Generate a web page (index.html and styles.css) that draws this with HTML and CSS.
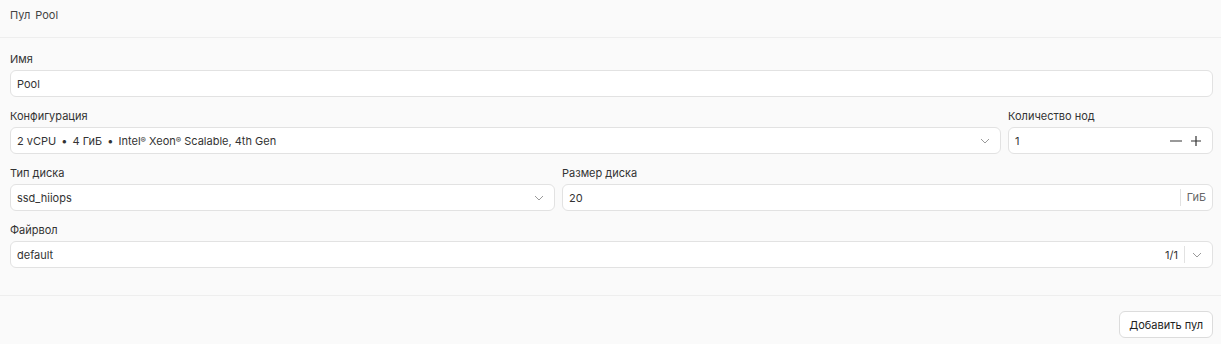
FILE: index.html
```html
<!DOCTYPE html>
<html lang="ru">
<head>
<meta charset="utf-8">
<link rel="stylesheet" href="styles.css">
</head>
<body>
<div class="page">
  <div class="header"><span>Пул</span><span>Pool</span></div>
  <div class="form">
    <div class="row">
      <div class="field grow">
        <div class="label">Имя</div>
        <div class="input"><span class="value">Pool</span></div>
      </div>
    </div>
    <div class="row">
      <div class="field grow">
        <div class="label">Конфигурация</div>
        <div class="input">
          <span class="value">2 vCPU <span class="dot">•</span> 4 ГиБ <span class="dot">•</span> Intel<sup>®</sup> Xeon<sup>®</sup> Scalable, 4th Gen</span>
          <svg class="chev" width="10" height="6" viewBox="0 0 10 6"><path d="M1 1l4 4 4-4" fill="none" stroke="#9a9a9a" stroke-width="1"/></svg>
        </div>
      </div>
      <div class="field nodes">
        <div class="label">Количество нод</div>
        <div class="input">
          <span class="value">1</span>
          <span class="steppers">
            <svg width="12" height="12" viewBox="0 0 12 12"><path d="M0 6h12" stroke="#555" stroke-width="1.2"/></svg>
            <svg width="12" height="12" viewBox="0 0 12 12"><path d="M1 6h10M6 1v10" stroke="#333" stroke-width="1.2"/></svg>
          </span>
        </div>
      </div>
    </div>
    <div class="row">
      <div class="field disktype">
        <div class="label">Тип диска</div>
        <div class="input">
          <span class="value">ssd_hiiops</span>
          <svg class="chev" width="10" height="6" viewBox="0 0 10 6"><path d="M1 1l4 4 4-4" fill="none" stroke="#9a9a9a" stroke-width="1"/></svg>
        </div>
      </div>
      <div class="field grow">
        <div class="label">Размер диска</div>
        <div class="input">
          <span class="value">20</span>
          <span class="suffix">ГиБ</span>
        </div>
      </div>
    </div>
    <div class="row">
      <div class="field grow">
        <div class="label">Файрвол</div>
        <div class="input">
          <span class="value">default</span>
          <span class="count">1/1</span>
          <span class="sep"></span>
          <svg class="chev2" width="10" height="6" viewBox="0 0 10 6"><path d="M1 1l4 4 4-4" fill="none" stroke="#9a9a9a" stroke-width="1"/></svg>
        </div>
      </div>
    </div>
  </div>
  <div class="footer">
    <button class="btn">Добавить пул</button>
  </div>
</div>
</body>
</html>
```
FILE: styles.css
```css
html, body {
  margin: 0;
  padding: 0;
  background: #fafafa;
}
body {
  font-family: Inter, "Noto Sans", sans-serif;
  font-size: 11px;
  color: #333;
}
.page {
  width: 1221px;
  height: 344px;
  overflow: hidden;
}
.header {
  height: 38px;
  box-sizing: border-box;
  padding: 8px 10px 0 10px;
  line-height: 14px;
  color: #444;
  border-bottom: 1px solid #eeeeee;
  display: flex;
  gap: 5px;
}
.form {
  padding: 14px 8px 27px 10px;
  display: flex;
  flex-direction: column;
  gap: 12px;
  border-bottom: 1px solid #eeeeee;
}
.row {
  display: flex;
  gap: 7px;
}
.field {
  display: flex;
  flex-direction: column;
  gap: 4px;
}
.grow { flex: 1; }
.disktype { width: 545px; }
.nodes { width: 205px; }
.label {
  line-height: 14px;
  color: #333;
}
.input {
  height: 27px;
  box-sizing: border-box;
  background: #fff;
  border: 1px solid #e2e2e2;
  border-radius: 6px;
  display: flex;
  align-items: center;
  padding: 0 6px;
}
.value {
  flex: 1;
  color: #333;
  white-space: nowrap;
}
.value sup {
  font-size: 8px;
  vertical-align: 2px;
  line-height: 0;
}
.dot {
  margin: 0 2px;
  font-size: 11px;
}
.chev { margin-right: 4px; }
.steppers {
  display: flex;
  gap: 8px;
  margin-right: 4px;
}
.suffix {
  border-left: 1px solid #e2e2e2;
  padding-left: 6px;
  height: 17px;
  line-height: 17px;
  color: #666;
}
.count {
  color: #333;
  margin-right: 6px;
}
.sep {
  width: 1px;
  height: 17px;
  background: #e2e2e2;
  margin-right: 7px;
}
.chev2 { margin-right: 4px; }
.footer {
  display: flex;
  justify-content: flex-end;
  padding: 15px 8px 0 10px;
}
.btn {
  font-family: Inter, "Noto Sans", sans-serif;
  font-size: 11px;
  color: #222;
  background: #fff;
  border: 1px solid #dcdcdc;
  border-radius: 6px;
  height: 27px;
  padding: 0 9px;
  cursor: pointer;
}
```
